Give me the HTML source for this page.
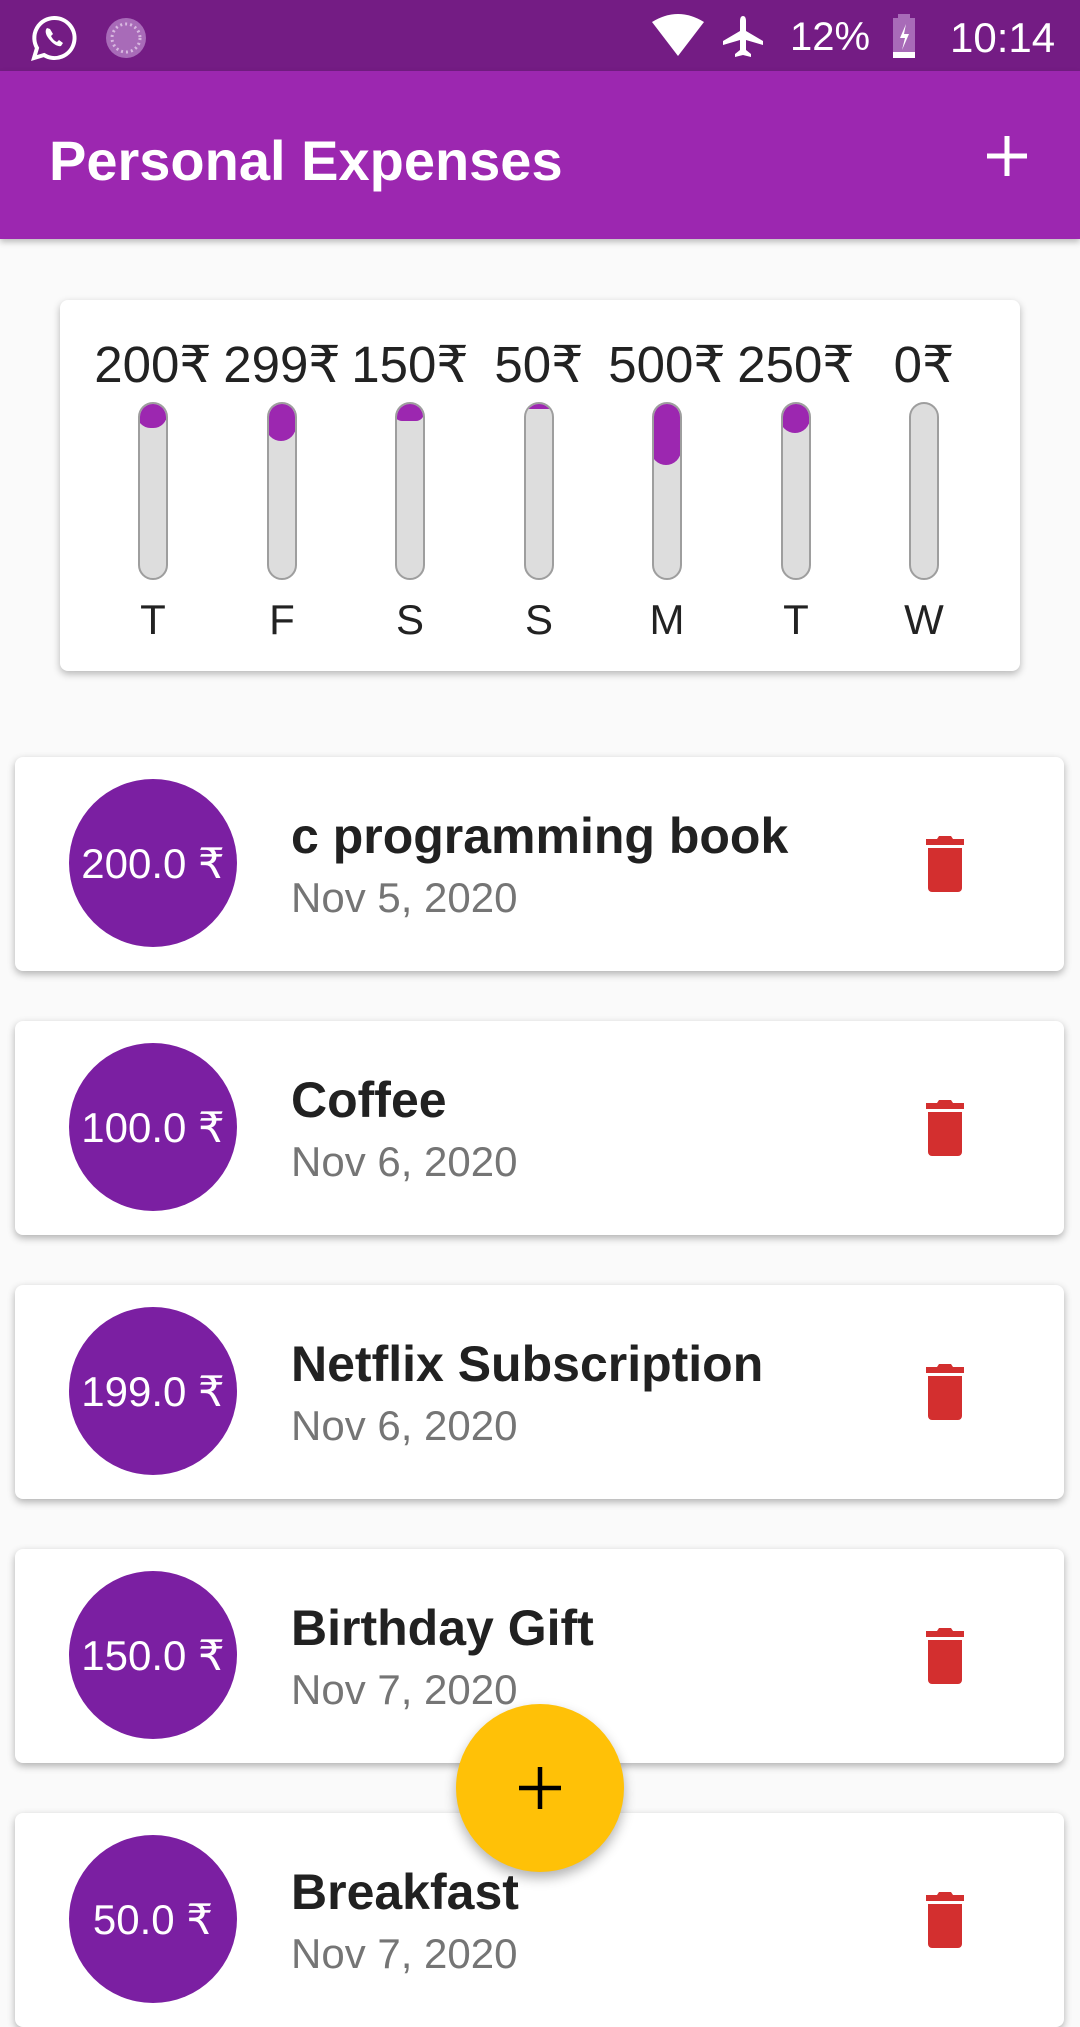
<!DOCTYPE html>
<html><head><meta charset="utf-8"><style>
*{margin:0;padding:0;box-sizing:border-box}
body{width:1080px;height:1920px;background:#fafafa;font-family:"Liberation Sans",sans-serif;position:relative;overflow:hidden}
.a{position:absolute}
.sb{left:0;top:0;width:1080px;height:71px;background:#741c84}
.ab{left:0;top:71px;width:1080px;height:168px;background:#9c27b0;box-shadow:0 3px 6px rgba(0,0,0,.25)}
.chart{left:60px;top:300px;width:960px;height:371px;background:#fff;border-radius:8px;box-shadow:0 3px 8px rgba(0,0,0,.28)}
.amt{width:150px;text-align:center;font-size:51px;line-height:1;color:#222;top:339px;white-space:nowrap}
.day{width:140px;text-align:center;font-size:42px;line-height:1;color:#222;top:599px}
.bar{width:30px;top:402px;height:178px;background:#ddd;border:2.5px solid #9e9e9e;border-radius:15px;overflow:hidden}
.fill{position:absolute;left:-3px;top:-3px;width:30px;background:#9c27b0;border-radius:15px}
.card{left:15px;width:1049px;height:214px;background:#fff;border-radius:8px;box-shadow:0 3px 8px rgba(0,0,0,.3)}
.circ{left:54px;top:22px;width:168px;height:168px;border-radius:50%;background:#7b1fa2;color:#fff;font-size:42px;display:flex;align-items:center;justify-content:center;white-space:nowrap}
.tt{left:276px;top:54px;font-size:50px;font-weight:bold;line-height:1;color:#212121;white-space:nowrap}
.dt{left:276px;top:120px;font-size:42px;line-height:1;color:#757575;white-space:nowrap}
.tr{left:909px;top:79px}
</style></head><body>
<div class="a sb"></div>
<svg class="a" style="left:30px;top:14px" width="48" height="48" viewBox="0 0 48 48"><path d="M24 4a20 20 0 0 0-17 30l-3 10 10-3A20 20 0 1 0 24 4z" fill="none" stroke="#fff" stroke-width="4"/><path d="M17 14c-2 2-2 6 2 11s9 8 12 7l2-3-4-3-2 2c-3-1-5-4-6-6l2-2-3-5z" fill="#fff"/></svg>
<svg class="a" style="left:104px;top:16px" width="44" height="44" viewBox="0 0 44 44"><circle cx="22" cy="22" r="20" fill="#a86bb8"/><circle cx="22" cy="22" r="14" fill="none" stroke="#d8b8e0" stroke-width="3" stroke-dasharray="2 3"/></svg>
<svg class="a" style="left:650px;top:14px" width="56" height="42" viewBox="0 0 56 42"><path d="M2 8Q28-8 54 8L28 42z" fill="#fff"/></svg>
<svg class="a" style="left:720px;top:14px" width="46" height="46" viewBox="0 0 46 46"><path d="M23 2c2 0 3 2 3 5v10l17 10v4L26 26v10l5 4v3l-8-2-8 2v-3l5-4V26L3 31v-4l17-10V7c0-3 1-5 3-5z" fill="#fff"/></svg>
<div class="a" style="left:790px;top:17px;font-size:40px;color:#fff;line-height:1">12%</div>
<svg class="a" style="left:891px;top:14px" width="26" height="44" viewBox="0 0 26 44"><rect x="7" y="0" width="12" height="4" fill="#a86bb8"/><rect x="2" y="4" width="22" height="34" fill="#a86bb8"/><rect x="2" y="38" width="22" height="6" fill="#fff"/><path d="M15 10l-6 14h5l-3 12 7-16h-5z" fill="#fff"/></svg>
<div class="a" style="left:950px;top:17px;font-size:42px;color:#fff;line-height:1">10:14</div>
<div class="a ab"></div>
<div class="a" style="left:49px;top:133px;font-size:56px;font-weight:bold;color:#fff;line-height:1">Personal Expenses</div>
<svg class="a" style="left:985px;top:134px" width="44" height="44" viewBox="0 0 44 44"><path d="M22 2v40M2 22h40" stroke="#fff" stroke-width="5"/></svg>
<div class="a chart"></div>
<div class="a amt" style="left:78px">200₹</div>
<div class="a amt" style="left:207px">299₹</div>
<div class="a amt" style="left:335px">150₹</div>
<div class="a amt" style="left:464px">50₹</div>
<div class="a amt" style="left:592px">500₹</div>
<div class="a amt" style="left:721px">250₹</div>
<div class="a amt" style="left:849px">0₹</div>
<div class="a bar" style="left:138px"><div class="fill" style="height:27px"></div></div>
<div class="a bar" style="left:267px"><div class="fill" style="height:40px"></div></div>
<div class="a bar" style="left:395px"><div class="fill" style="height:20px;border-radius:8px"></div></div>
<div class="a bar" style="left:524px"><div class="fill" style="height:8px;border-radius:3px"></div></div>
<div class="a bar" style="left:652px"><div class="fill" style="height:64px"></div></div>
<div class="a bar" style="left:781px"><div class="fill" style="height:32px"></div></div>
<div class="a bar" style="left:909px"></div>
<div class="a day" style="left:83px">T</div>
<div class="a day" style="left:212px">F</div>
<div class="a day" style="left:340px">S</div>
<div class="a day" style="left:469px">S</div>
<div class="a day" style="left:597px">M</div>
<div class="a day" style="left:726px">T</div>
<div class="a day" style="left:854px">W</div>

<div class="a card" style="top:757px"><div class="a circ">200.0 ₹</div><div class="a tt">c programming book</div><div class="a dt">Nov 5, 2020</div><svg class="a tr" width="42" height="56" viewBox="0 0 42 56"><path d="M15 0h12l2 3h11v6H2V3h11z" fill="#d32f2f"/><path d="M4 12h34v40a4 4 0 0 1-4 4H8a4 4 0 0 1-4-4z" fill="#d32f2f"/></svg></div>
<div class="a card" style="top:1021px"><div class="a circ">100.0 ₹</div><div class="a tt">Coffee</div><div class="a dt">Nov 6, 2020</div><svg class="a tr" width="42" height="56" viewBox="0 0 42 56"><path d="M15 0h12l2 3h11v6H2V3h11z" fill="#d32f2f"/><path d="M4 12h34v40a4 4 0 0 1-4 4H8a4 4 0 0 1-4-4z" fill="#d32f2f"/></svg></div>
<div class="a card" style="top:1285px"><div class="a circ">199.0 ₹</div><div class="a tt">Netflix Subscription</div><div class="a dt">Nov 6, 2020</div><svg class="a tr" width="42" height="56" viewBox="0 0 42 56"><path d="M15 0h12l2 3h11v6H2V3h11z" fill="#d32f2f"/><path d="M4 12h34v40a4 4 0 0 1-4 4H8a4 4 0 0 1-4-4z" fill="#d32f2f"/></svg></div>
<div class="a card" style="top:1549px"><div class="a circ">150.0 ₹</div><div class="a tt">Birthday Gift</div><div class="a dt">Nov 7, 2020</div><svg class="a tr" width="42" height="56" viewBox="0 0 42 56"><path d="M15 0h12l2 3h11v6H2V3h11z" fill="#d32f2f"/><path d="M4 12h34v40a4 4 0 0 1-4 4H8a4 4 0 0 1-4-4z" fill="#d32f2f"/></svg></div>
<div class="a card" style="top:1813px"><div class="a circ">50.0 ₹</div><div class="a tt">Breakfast</div><div class="a dt">Nov 7, 2020</div><svg class="a tr" width="42" height="56" viewBox="0 0 42 56"><path d="M15 0h12l2 3h11v6H2V3h11z" fill="#d32f2f"/><path d="M4 12h34v40a4 4 0 0 1-4 4H8a4 4 0 0 1-4-4z" fill="#d32f2f"/></svg></div>

<div class="a" style="left:456px;top:1704px;width:168px;height:168px;border-radius:50%;background:#ffc107;box-shadow:0 6px 12px rgba(0,0,0,.3)"></div>
<svg class="a" style="left:519px;top:1767px" width="42" height="42" viewBox="0 0 42 42"><path d="M21 0v42M0 21h42" stroke="#000" stroke-width="4.5"/></svg>
</body></html>
